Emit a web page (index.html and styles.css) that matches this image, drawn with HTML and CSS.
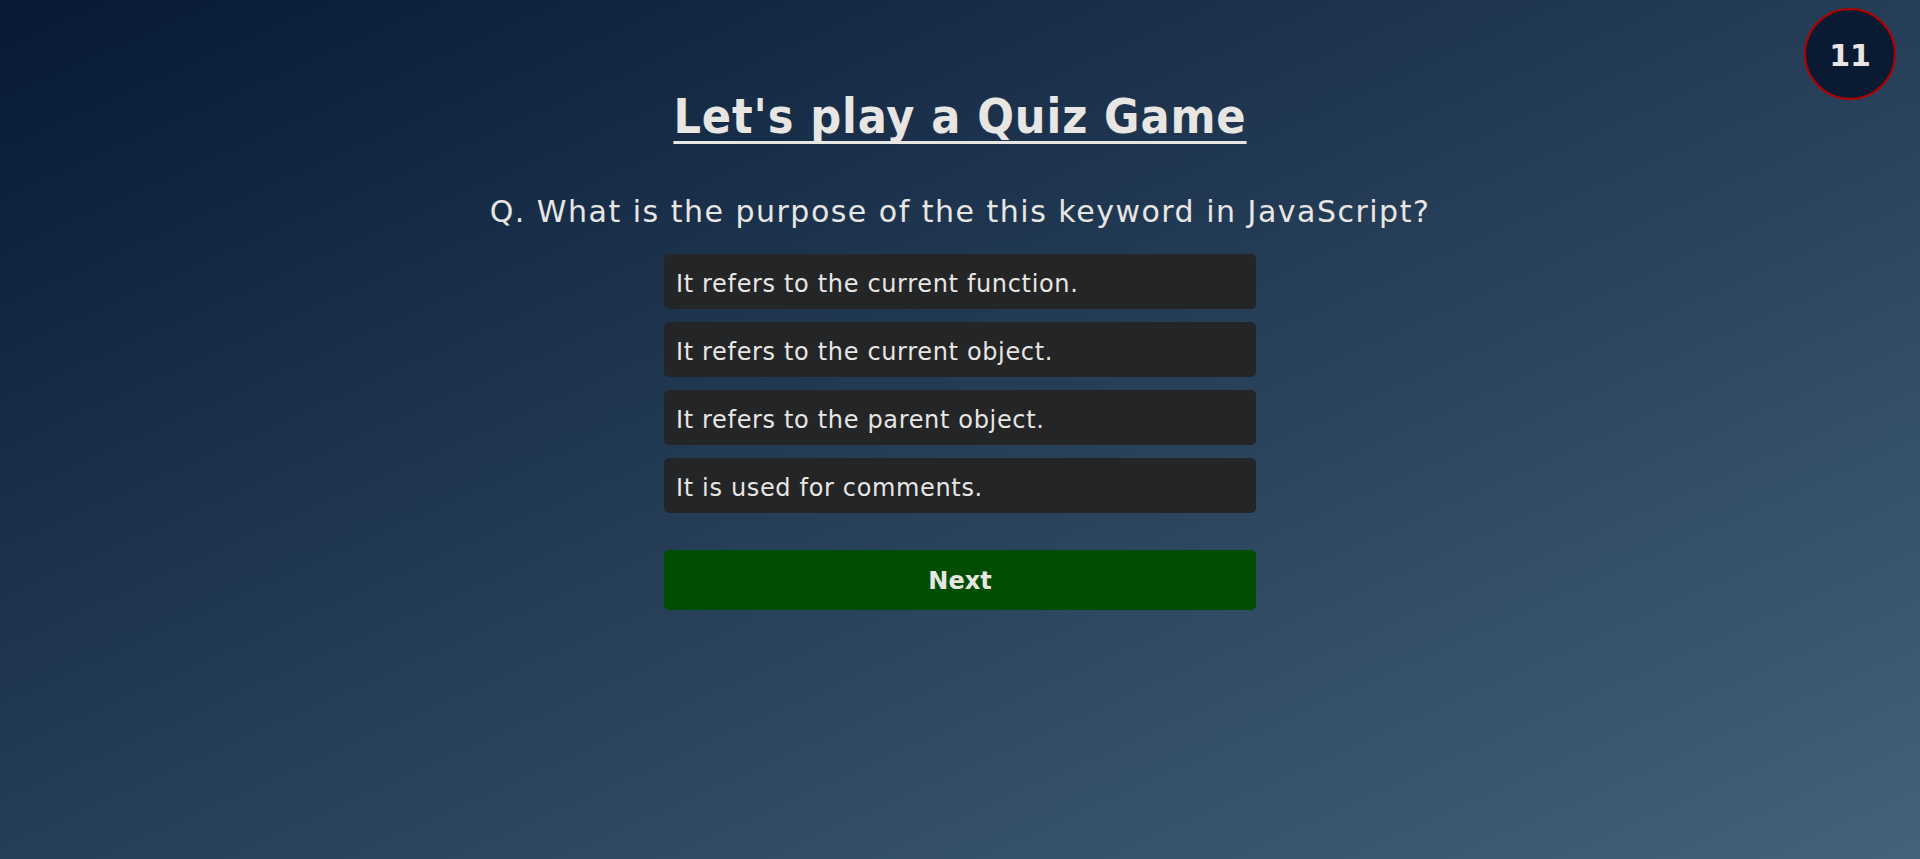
FILE: index.html
```html
<!DOCTYPE html>
<html lang="en">
<head>
<meta charset="utf-8">
<title>Quiz Game</title>
<link rel="stylesheet" href="styles.css">
</head>
<body>
  <div class="timer">11</div>
  <main class="quiz">
    <h1 class="title">Let's play a Quiz Game</h1>
    <h2 class="question">Q. What is the purpose of the this keyword in JavaScript?</h2>
    <ul class="options">
      <li class="option">It refers to the current function.</li>
      <li class="option">It refers to the current object.</li>
      <li class="option">It refers to the parent object.</li>
      <li class="option">It is used for comments.</li>
    </ul>
    <button class="next">Next</button>
  </main>
</body>
</html>
```
FILE: styles.css
```css
html, body {
  margin: 0;
  height: 100%;
}
body {
  background: linear-gradient(to bottom right, #071935, #44627a);
  color: #e8e6e3;
  font-family: "DejaVu Sans", sans-serif;
  overflow: hidden;
}
.timer {
  position: absolute;
  top: 8px;
  right: 24px;
  width: 88px;
  height: 84px;
  padding-top: 4px;
  border: 2px solid #b00000;
  border-radius: 50%;
  background: #0a1a33;
  display: flex;
  align-items: center;
  justify-content: center;
  font-family: "DejaVu Sans", sans-serif;
  font-weight: bold;
  font-size: 30px;
  line-height: 1;
  color: #e8e6e3;
}
.quiz {
  display: flex;
  flex-direction: column;
  align-items: center;
  padding-top: 88px;
}
.title {
  margin: 0;
  font-family: "DejaVu Sans Condensed", "DejaVu Sans", sans-serif;
  font-size: 48px;
  line-height: 56px;
  font-weight: bold;
  letter-spacing: 0.9px;
  text-decoration: underline;
  text-decoration-thickness: 3px;
  text-underline-offset: 8px;
  text-decoration-skip-ink: none;
}
.question {
  margin: 50px 0 0;
  font-size: 30px;
  line-height: 35px;
  font-weight: normal;
  letter-spacing: 1.5px;
}
.options {
  list-style: none;
  margin: 25px 0 0;
  padding: 0;
  width: 592px;
  display: flex;
  flex-direction: column;
  gap: 13px;
}
.option {
  background: #232527;
  border-radius: 5px;
  height: 55px;
  box-sizing: border-box;
  padding: 4px 12px 0;
  display: flex;
  align-items: center;
  font-size: 24px;
  letter-spacing: 0.66px;
}
.next {
  margin-top: 37px;
  width: 592px;
  height: 60px;
  border: none;
  border-radius: 5px;
  background: #014d01;
  color: #e8e6e3;
  font-family: "DejaVu Sans", sans-serif;
  font-weight: bold;
  font-size: 24px;
  padding: 2px 0 0;
}
```
